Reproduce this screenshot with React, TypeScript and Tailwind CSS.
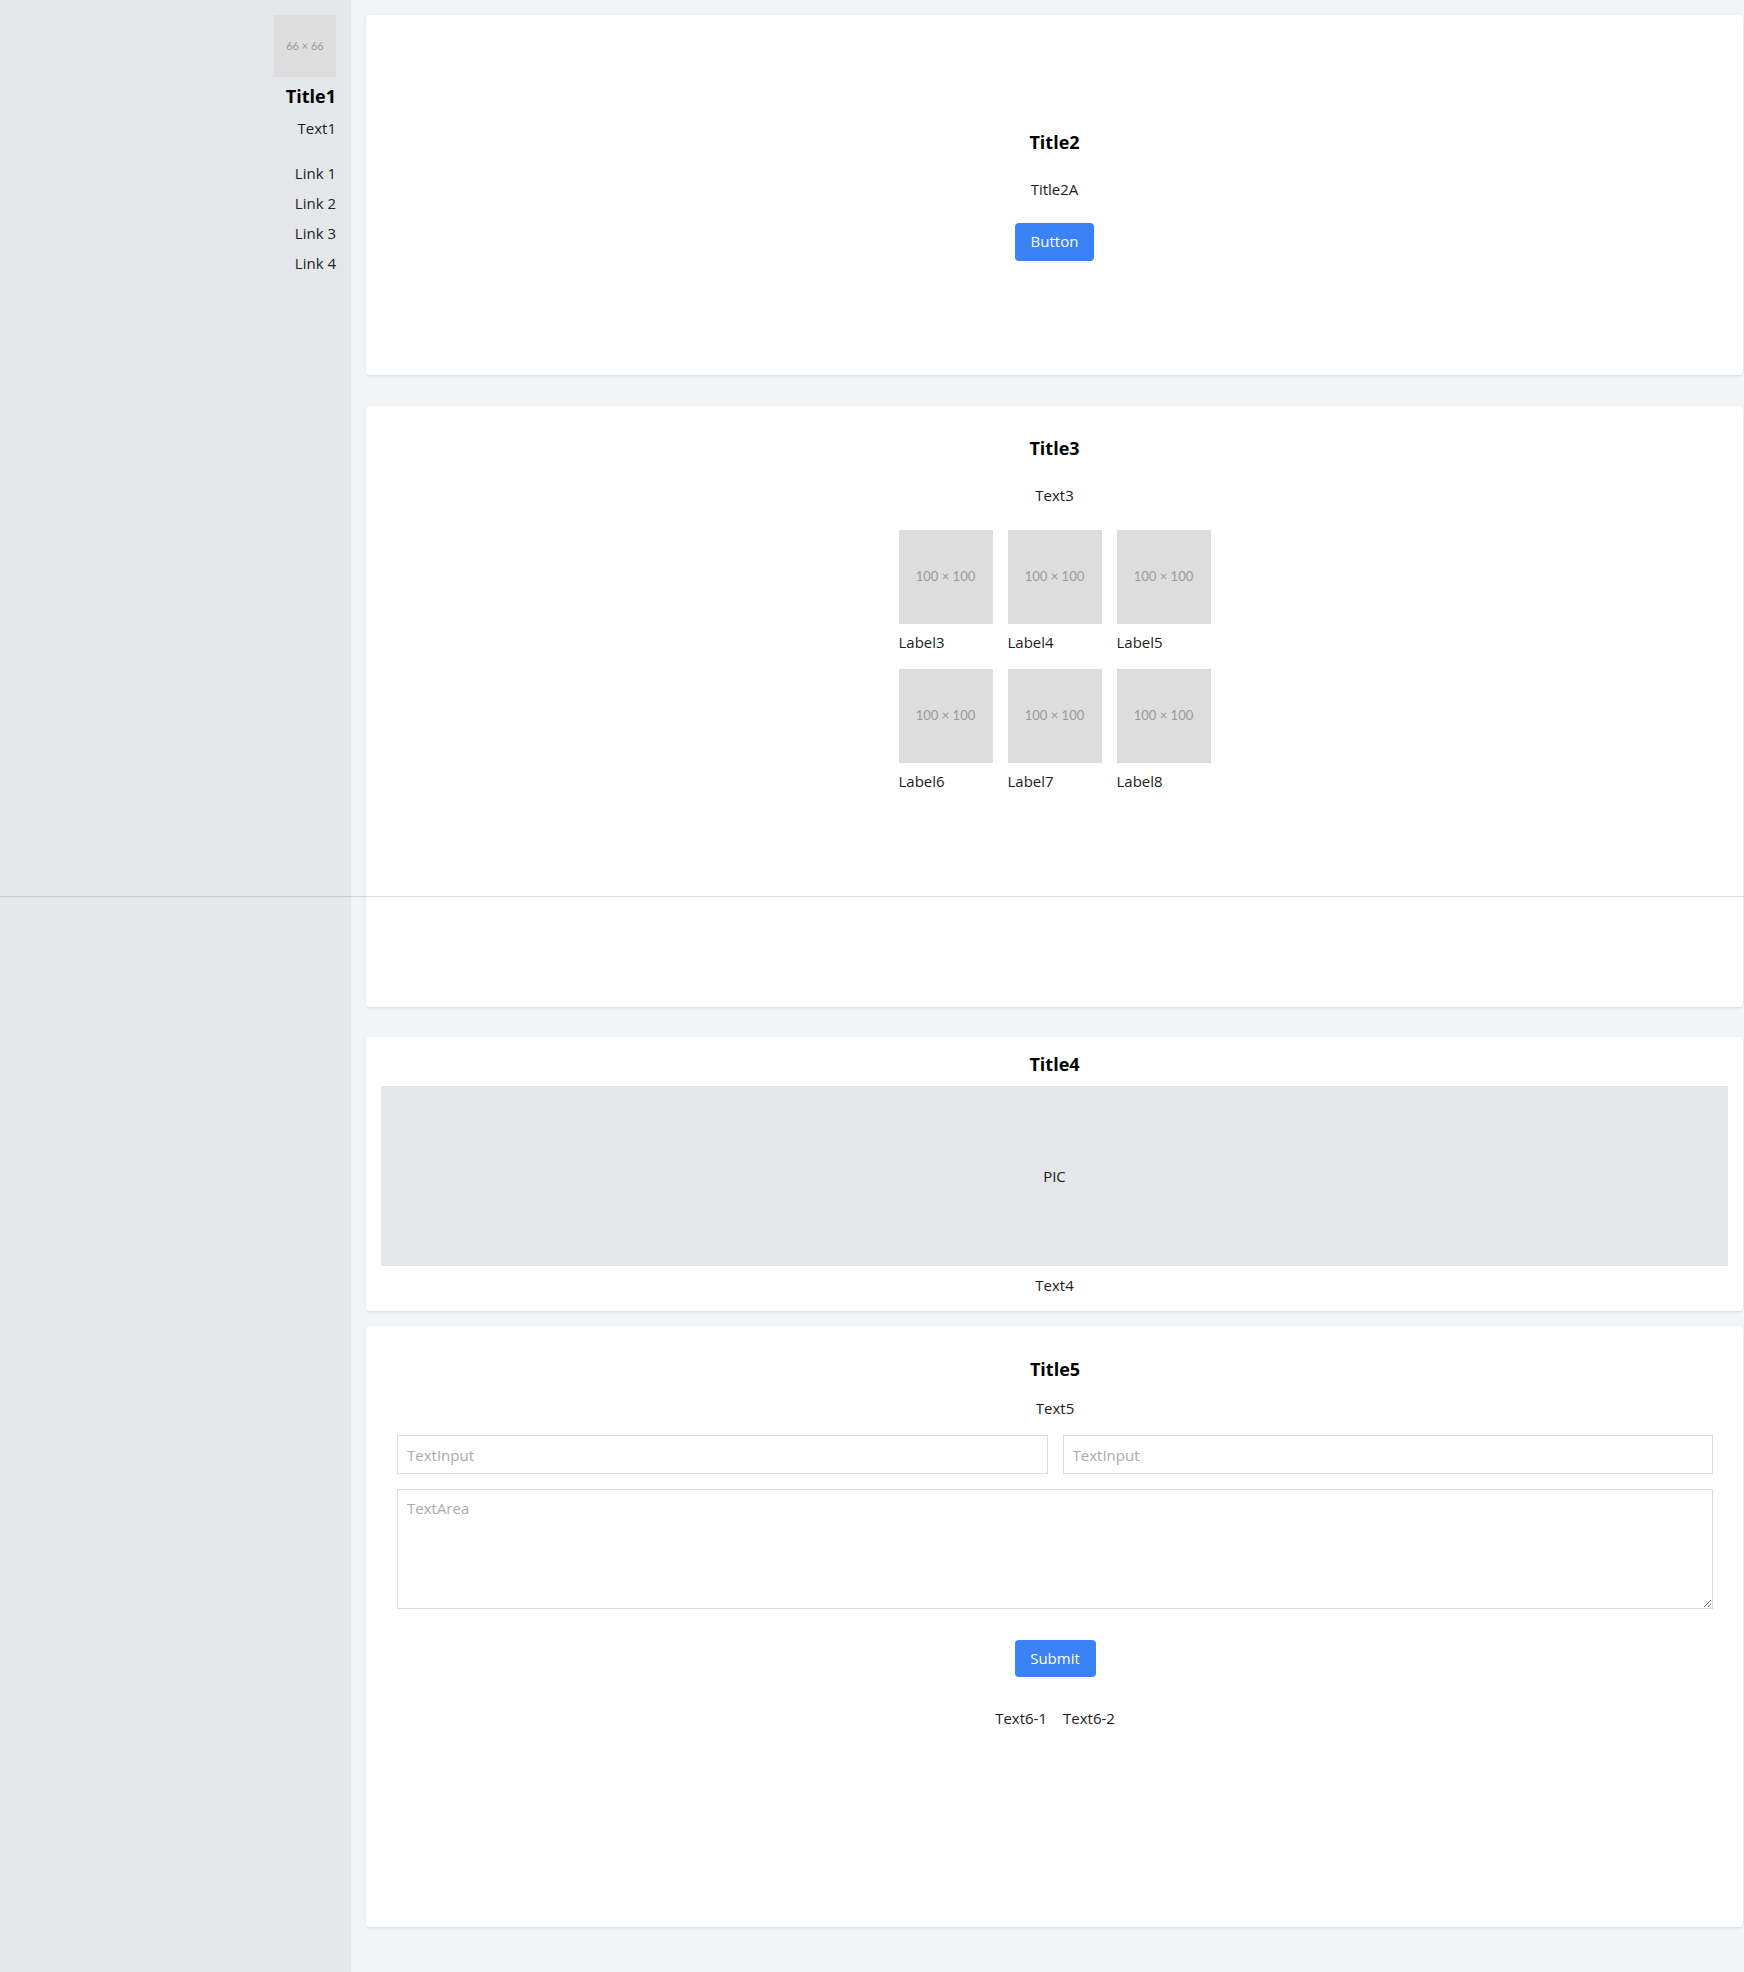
import React from 'react';

const font = "font-['Open_Sans','Noto_Sans',sans-serif]";

const links = ['Link 1', 'Link 2', 'Link 3', 'Link 4'];
const gallery = ['Label3', 'Label4', 'Label5', 'Label6', 'Label7', 'Label8'];

const Placeholder = ({ size, label, text }: { size: string; label: string; text: string }) => (
  <div className={`${size} bg-[#dddddd] flex items-center justify-center font-['Lato',sans-serif] ${text} text-[#9a9a9a]`}>
    {label}
  </div>
);

const App = () => {
  return (
    <div className={`relative flex min-h-[1972px] bg-[#f3f4f6] ${font} text-[15px] text-[#1c1c1c]`}>
      {/* sidebar */}
      <aside className="w-[351px] shrink-0 bg-[#e5e7eb] flex flex-col items-end pt-[15px] pr-[15px]">
        <Placeholder size="w-[62px] h-[62px]" label="66 × 66" text="text-[11px]" />
        <h1 className="mt-[7px] text-[18px] leading-[24px] font-bold text-black">Title1</h1>
        <p className="mt-[9px] leading-[22px]">Text1</p>
        <nav className="mt-[23px] flex flex-col items-end gap-[8px]">
          {links.map((l) => (
            <a key={l} href="#" className="leading-[22px] text-[#222]">
              {l}
            </a>
          ))}
        </nav>
      </aside>

      {/* main */}
      <main className="flex-1 pt-[15px] pl-[15px] pr-px">
        {/* hero */}
        <section className="h-[360px] bg-white rounded shadow-[0_1px_3px_rgba(0,0,0,0.1)] flex flex-col items-center justify-center">
          <h2 className="text-[18px] leading-[24px] font-bold text-black">Title2</h2>
          <p className="mt-[24px] leading-[22px]">Title2A</p>
          <button className="mt-[23px] w-[79px] h-[38px] rounded bg-[#3b82f6] text-white text-[15px]">
            Button
          </button>
        </section>

        {/* gallery */}
        <section className="mt-[31px] h-[601px] bg-white rounded shadow-[0_1px_3px_rgba(0,0,0,0.1)] flex flex-col items-center pt-[30px]">
          <h2 className="text-[18px] leading-[24px] font-bold text-black">Title3</h2>
          <p className="mt-[24px] leading-[22px]">Text3</p>
          <div className="mt-[24px] grid grid-cols-3 gap-x-[15px] gap-y-[15px]">
            {gallery.map((g) => (
              <div key={g} className="flex flex-col">
                <Placeholder size="w-[94px] h-[94px]" label="100 × 100" text="text-[13px]" />
                <span className="mt-[7px] mb-px leading-[22px]">{g}</span>
              </div>
            ))}
          </div>
        </section>

        {/* picture */}
        <section className="mt-[30px] bg-white rounded shadow-[0_1px_3px_rgba(0,0,0,0.1)] flex flex-col items-center pt-[15px] pb-[15px] px-[15px]">
          <h2 className="text-[18px] leading-[24px] font-bold text-black">Title4</h2>
          <div className="mt-[10px] w-full h-[180px] bg-[#e5e7eb] flex items-center justify-center">PIC</div>
          <p className="mt-[8px] leading-[22px]">Text4</p>
        </section>

        {/* form */}
        <section className="mt-[15px] h-[601px] bg-white rounded shadow-[0_1px_3px_rgba(0,0,0,0.1)] flex flex-col items-center pt-[31px] pl-[31px] pr-[30px]">
          <h2 className="text-[18px] leading-[24px] font-bold text-black">Title5</h2>
          <p className="mt-[16px] leading-[22px]">Text5</p>
          <div className="mt-[16px] w-full grid grid-cols-2 gap-[15px]">
            <input
              placeholder="TextInput"
              className="h-[39px] border border-[#dcdcdc] px-[9px] text-[15px] placeholder:text-[#aaa] outline-none"
            />
            <input
              placeholder="TextInput"
              className="h-[39px] border border-[#dcdcdc] px-[9px] text-[15px] placeholder:text-[#aaa] outline-none"
            />
          </div>
          <textarea
            placeholder="TextArea"
            className="mt-[15px] w-full h-[120px] border border-[#dcdcdc] px-[9px] py-[7px] text-[15px] placeholder:text-[#aaa] outline-none"
          />
          <button className="mt-[31px] w-[81px] h-[37px] rounded bg-[#3b82f6] text-white text-[15px]">
            Submit
          </button>
          <div className="mt-[30px] flex gap-[16px] leading-[22px]">
            <span>Text6-1</span>
            <span>Text6-2</span>
          </div>
        </section>
      </main>

      {/* thin rule across the page */}
      <div className="absolute left-0 right-0 top-[896px] h-px bg-black/[0.13]" />
    </div>
  );
};

export default App;
